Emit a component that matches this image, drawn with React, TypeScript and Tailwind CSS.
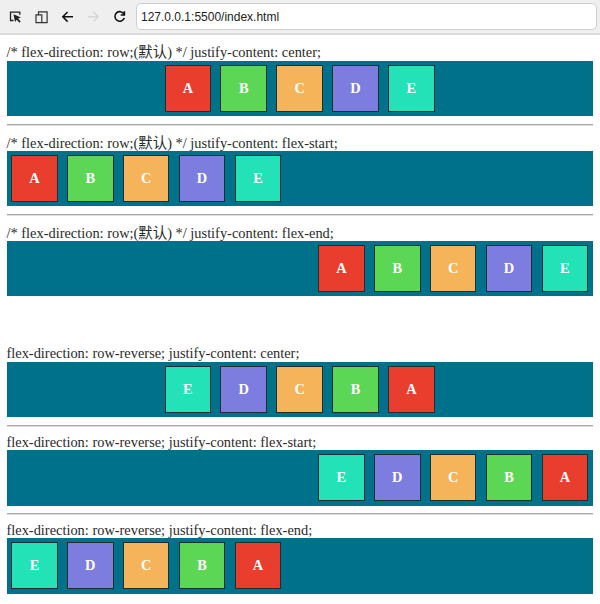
import React from 'react';

const boxes = [
  { name: 'A', color: 'bg-[#e93e2e]' },
  { name: 'B', color: 'bg-[#5bd755]' },
  { name: 'C', color: 'bg-[#f5b45a]' },
  { name: 'D', color: 'bg-[#7d7de0]' },
  { name: 'E', color: 'bg-[#23e2b8]' },
];

function Demo({ text, caption, flow }: { text: string; caption: string; flow: string }) {
  return (
    <section>
      <div className={`flex items-end whitespace-nowrap text-[14.4px] text-[#2a2a2a] ${caption}`}>
        <span>{text}</span>
      </div>
      <div className={`flex h-[55.4px] items-start bg-[#00718b] pt-1 ${flow}`}>
        {boxes.map((b) => (
          <div key={b.name} className={`mx-[4.65px] flex h-[47px] w-[46.6px] shrink-0 items-center justify-center border border-[#222d2d] text-[14.4px] font-bold text-white ${b.color}`}>
            {b.name}
          </div>
        ))}
      </div>
    </section>
  );
}

function Rule() {
  return <div className="mt-[7.6px] h-[2px] border-t border-[#a8a8a8] bg-[#dedede]" />;
}

export default function App() {
  return (
    <div className="h-[604px] w-[600px] overflow-hidden bg-white">
      <header className="flex h-[35px] items-start border-b-2 border-[#dcdcdc] bg-[#efefef] pl-[9px] font-['Liberation_Sans',Arial,sans-serif]">
        <svg width="125" height="33" viewBox="9 0 125 33" fill="none" stroke="#222" strokeWidth="1.3" className="shrink-0">
          <path d="M13.5 20.5h-3v-8.3h9.3v2.6" />
          <path d="M13.5 14.2l7.4 3.2-2.8 1.2 2.6 2.9-1.3 1.2-2.6-3-1.8 2.3z" fill="#222" stroke="none" />
          <path d="M38.5 14.8v-3h8.6v10.9h-4.8M36 14.8h5.8v7.9H36z" stroke="#333" strokeWidth="1.2" />
          <path d="M73 16.8H62.8M67.6 12l-4.8 4.8 4.8 4.8" stroke="#111" strokeWidth="1.5" />
          <path d="M88 16.8h10.2M93.4 12l4.8 4.8-4.8 4.8" stroke="#d2d2d2" strokeWidth="1.2" />
          <path d="M124 14.2a4.8 4.8 0 1 0 .3 3.7M124.4 11.3v3.7h-3.7" stroke="#111" strokeWidth="1.6" />
        </svg>
        <div className="mt-[3px] ml-[2px] flex h-[27px] w-[461px] items-center rounded-[5px] border border-[#cfcfcf] bg-white pl-[4px] text-[12px] text-[#222]">
          <span>127.0.0.1:5500/index.html</span>
        </div>
      </header>
      <main className="ml-[6.5px] w-[586.3px] font-['Liberation_Serif','Noto_Sans_CJK_SC',serif]">
        <Demo text="/* flex-direction: row;(默认) */ justify-content: center;" caption="h-[26px] leading-[17px]" flow="flex-row justify-center" />
        <Rule />
        <Demo text="/* flex-direction: row;(默认) */ justify-content: flex-start;" caption="h-[25px] leading-[15px]" flow="flex-row justify-start" />
        <Rule />
        <Demo text="/* flex-direction: row;(默认) */ justify-content: flex-end;" caption="h-[25px] leading-[15px]" flow="flex-row justify-end" />
        <Demo text="flex-direction: row-reverse; justify-content: center;" caption="h-[65.6px] leading-[17px]" flow="flex-row-reverse justify-center" />
        <Rule />
        <Demo text="flex-direction: row-reverse; justify-content: flex-start;" caption="h-[23.2px] leading-[15px]" flow="flex-row-reverse justify-start" />
        <Rule />
        <Demo text="flex-direction: row-reverse; justify-content: flex-end;" caption="h-[23px] leading-[15px]" flow="flex-row-reverse justify-end" />
      </main>
    </div>
  );
}
